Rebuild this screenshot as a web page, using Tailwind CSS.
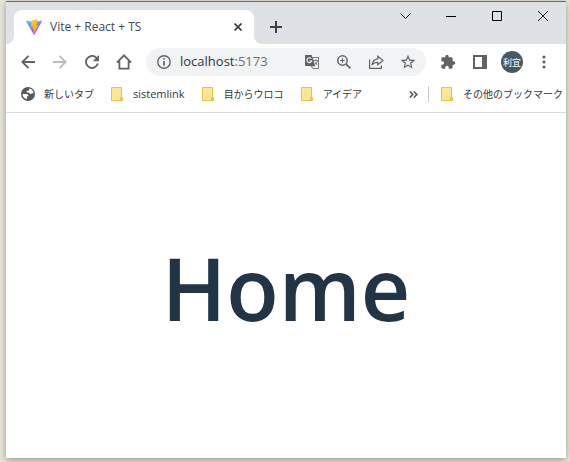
<!DOCTYPE html>
<html lang="ja">
<head>
    <meta charset="UTF-8">
    <meta name="viewport" content="width=device-width, initial-scale=1.0">
    <title>Vite + React + TS</title>
    <script src="https://cdn.jsdelivr.net/npm/@tailwindcss/browser@4"></script>
</head>
<body class="bg-[#e9e6da] font-['Open_Sans','Noto_Sans_CJK_JP',sans-serif]">
    <div class="h-screen px-1 pb-1 pl-[6px] pt-px">
        <div class="flex h-full flex-col border-t border-[#6b6b68] bg-white shadow-[0_2px_7px_rgba(80,75,55,0.5)]">
            <!-- tab strip -->
            <header class="flex h-[42px] shrink-0 bg-[#dee1e6]">
                <div class="w-2 bg-white"><div class="h-full rounded-br-lg bg-[#dee1e6]"></div></div>
                <div class="mt-2 flex w-60 items-center rounded-t-lg bg-white pl-3 pr-2">
                    <svg class="size-4" viewBox="0 0 32 32">
                        <defs>
                            <linearGradient id="shield" x1="0" y1="0" x2="0.6" y2="1"><stop stop-color="#41d1ff"/><stop offset="1" stop-color="#bd34fe"/></linearGradient>
                            <linearGradient id="bolt" x1="0.3" y1="0" x2="0.6" y2="1"><stop stop-color="#ffd83a"/><stop offset="0.2" stop-color="#ffc520"/><stop offset="1" stop-color="#ffa800"/></linearGradient>
                        </defs>
                        <path fill="url(#shield)" d="M31.8 4.8 16.9 31a.9.9 0 0 1-1.5 0L.2 4.8a.9.9 0 0 1 .9-1.3L16 6.2l14.9-2.7a.9.9 0 0 1 .9 1.3Z"/>
                        <path fill="url(#bolt)" d="m23.3.3-12.3 2.400-1 13.300 4.400-.9-1.200 5.500 3-.8-1.800 9c-.1.6.6.8.9.4L25 11.800l-4.300.8L23.300.3Z"/>
                    </svg>
                    <span class="ml-2 flex-1 whitespace-nowrap text-xs text-[#45494d]">Vite + React + TS</span>
                    <button class="flex size-4 items-center justify-center" aria-label="Close tab">
                        <svg class="size-2" viewBox="0 0 8 8" fill="none" stroke="#3c4043" stroke-width="1.7"><path d="m.5.5 7 7m0-7-7 7"/></svg>
                    </button>
                </div>
                <div class="w-2 bg-white"><div class="h-full rounded-bl-lg bg-[#dee1e6]"></div></div>
                <button class="mt-[11px] flex size-7 items-center justify-center" aria-label="New tab">
                    <svg class="size-3" viewBox="0 0 12 12" fill="none" stroke="#3c4043" stroke-width="2"><path d="M6 0v12M0 6h12"/></svg>
                </button>
                <div class="ml-auto flex h-7 text-[#111]">
                    <button class="flex w-[46px] items-center justify-center" aria-label="Search tabs">
                        <svg class="h-[6px] w-[11px]" viewBox="0 0 11 6" fill="none" stroke="currentColor"><path d="m.5.5 5 5 5-5"/></svg>
                    </button>
                    <button class="flex w-[46px] items-center justify-center" aria-label="Minimize">
                        <svg class="h-px w-[10px]" viewBox="0 0 10 1"><path fill="#000" d="M0 0h10v1H0z"/></svg>
                    </button>
                    <button class="flex w-[46px] items-center justify-center" aria-label="Maximize">
                        <svg class="size-[10px]" viewBox="0 0 10 10" fill="none" stroke="#000"><path d="M.5.5h9v9h-9z"/></svg>
                    </button>
                    <button class="flex w-[46px] items-center justify-center" aria-label="Close">
                        <svg class="size-[10px]" viewBox="0 0 10 10" fill="none" stroke="currentColor"><path d="m0 0 10 10M10 0 0 10"/></svg>
                    </button>
                </div>
            </header>

            <!-- toolbar -->
            <nav class="flex h-9 shrink-0 items-center px-[6px] text-[#5f6368]">
                <button class="flex w-8 justify-center" aria-label="Back">
                    <svg class="size-[14px]" viewBox="0 0 14 14" fill="none" stroke="currentColor" stroke-width="1.9"><path d="M14 7H1.5M7.5.8 1.3 7l6.2 6.2"/></svg>
                </button>
                <button class="flex w-8 justify-center text-[#bbbdbf]" aria-label="Forward">
                    <svg class="size-[14px]" viewBox="0 0 14 14" fill="none" stroke="currentColor" stroke-width="1.9"><path d="M0 7h12.5M6.5.8 12.7 7l-6.2 6.2"/></svg>
                </button>
                <button class="flex w-8 justify-center" aria-label="Reload">
                    <svg class="size-[14px]" viewBox="0 0 14 14" fill="none" stroke="currentColor" stroke-width="1.9"><path d="M12.8 8.6A6 6 0 1 1 11.2 2.6L12.8 4.2"/><path fill="currentColor" stroke="none" d="M14 0v6.2H7.8z"/></svg>
                </button>
                <button class="flex w-8 justify-center" aria-label="Home page">
                    <svg class="size-4" viewBox="0 0 16 16" fill="none" stroke="currentColor" stroke-width="1.8"><path d="M.9 8.6 8 1.4l7.1 7.2M3.4 7v7.6h9.2V7"/></svg>
                </button>
                <div class="ml-[6px] mr-[6px] flex h-7 min-w-0 flex-1 items-center rounded-full bg-[#f1f3f4] pl-[11px] pr-[2px]">
                    <svg class="size-[14px] shrink-0" viewBox="0 0 14 14" fill="none" stroke="currentColor" stroke-width="1.4"><circle cx="7" cy="7" r="6.2"/><path stroke-width="1.7" d="M7 3.2v1.6M7 6v4.7"/></svg>
                    <a href="#" class="ml-[9px] min-w-0 flex-1 text-[13px] text-[#33363a]">localhost<span class="text-[#6b6f74]">:5173</span></a>
                    <button class="flex w-8 shrink-0 justify-center" aria-label="Translate">
                        <svg class="size-4" viewBox="0 0 16 16" fill="none">
                            <path fill="#f1f3f4" stroke="#75797d" d="M8.5 3.500h6v11H9l-2-2.500h3.600z"/>
                            <path fill="#5f6368" d="M1 1h6.700l3 11H2a1 1 0 0 1-1-1V1Z"/>
                            <path stroke="#f1f3f4" stroke-width="1.100" d="M7.300 4.800A2.400 2.400 0 1 0 7.600 7H5.400"/>
                            <path stroke="#75797d" d="M9.700 6.500h4.300M12 5.300v1.200M13.300 6.800c-.5 2-1.300 3-2.500 3.900M11 8c.6 1.200 1.300 2 2.500 3"/>
                        </svg>
                    </button>
                    <button class="flex w-8 shrink-0 justify-center" aria-label="Zoom">
                        <svg class="size-[14px]" viewBox="0 0 14 14" fill="none" stroke="currentColor" stroke-width="1.5"><circle cx="5.500" cy="5.500" r="4.700"/><path d="m8.900 8.900 4.500 4.500"/><path stroke-width="1.100" d="M5.500 3.200v4.600M3.200 5.500h4.600"/></svg>
                    </button>
                    <button class="flex w-8 shrink-0 justify-center" aria-label="Share">
                        <svg class="size-4" viewBox="0 0 16 16" fill="none" stroke="currentColor" stroke-width="1.2"><path d="M1.600 5.500v8.900h11.800V11.500M9.800 2.200 15 6.500l-5.200 4.300V8.400C7.600 8.300 5.500 9 4 11c.5-3.500 2.500-5.700 5.800-6.200z"/></svg>
                    </button>
                    <button class="flex w-8 shrink-0 justify-center" aria-label="Bookmark this tab">
                        <svg class="size-4" viewBox="1 1 22 22" fill="currentColor"><path d="m22 9.240-7.190-.62L12 2 9.190 8.630 2 9.240l5.460 4.730L5.820 21 12 17.270 18.180 21l-1.630-7.030L22 9.240ZM12 15.400l-3.760 2.270 1-4.280-3.320-2.880 4.380-.38L12 6.100l1.710 4.040 4.380.38-3.320 2.880 1 4.280L12 15.400Z"/></svg>
                    </button>
                </div>
                <button class="flex w-8 justify-center" aria-label="Extensions">
                    <svg class="size-4" viewBox="0 0 24 24" fill="currentColor"><path d="M20.500 11H19V7a2 2 0 0 0-2-2h-4V3.500a2.500 2.500 0 0 0-5 0V5H4a2 2 0 0 0-2 2v3.800h1.500a2.700 2.700 0 0 1 0 5.400H2V20a2 2 0 0 0 2 2h3.800v-1.500a2.700 2.700 0 0 1 5.400 0V22H17a2 2 0 0 0 2-2v-4h1.500a2.500 2.500 0 0 0 0-5Z"/></svg>
                </button>
                <button class="flex w-8 justify-center" aria-label="Side panel">
                    <svg class="size-[14px]" viewBox="0 0 14 14"><path fill="currentColor" fill-rule="evenodd" d="M0 0h14v14H0zM2 2v10h7V2z"/></svg>
                </button>
                <button class="flex w-8 justify-center" aria-label="Profile">
                    <span class="flex size-[22px] items-center justify-center rounded-full bg-[#455a64] text-[9px] leading-none text-white">利宜</span>
                </button>
                <button class="flex w-8 justify-center" aria-label="Menu">
                    <svg class="h-[14px] w-1" viewBox="0 0 4 14" fill="currentColor"><circle cx="2" cy="2" r="1.6"/><circle cx="2" cy="7" r="1.6"/><circle cx="2" cy="12" r="1.6"/></svg>
                </button>
            </nav>

            <!-- bookmarks bar -->
            <nav class="flex h-[33px] shrink-0 items-center gap-[17px] whitespace-nowrap border-b border-[#dadce0] pb-1 pl-[15px] text-[10px] text-[#33363a]">
                <a href="#" class="flex items-center gap-[9px]">
                    <svg class="size-[14px]" viewBox="0 0 14 14"><circle cx="7" cy="7" r="7" fill="#55595e"/><path fill="#fff" d="M1.500 7h4c1.600 0 2 1 2 2.200H6v2.900c-2.600-.2-4.500-2.400-4.500-5.100ZM8.200 1.600v.9c0 .8-.5 1.300-1.300 1.300H5.700V5c0 .5 1 .6 1.800.6.8 0 1 .7 1.400 1.200.5.5 1.300.2 1.700-.2.500-.4 1.100-.3 1.900-.2-.2-2.500-1.900-4.400-4.300-4.800Z"/></svg>
                    新しいタブ
                </a>
                <a href="#" class="flex items-center gap-[10px]">
                    <svg class="h-[14px] w-3" viewBox="0 0 12 14" fill="#ffe694" stroke="#e8c34a"><path d="M.5.500h10v13H.5zM9.500 13.500V10.500l1-1 1 1v3z"/></svg>
                    <span class="text-[11px]">sistemlink</span>
                </a>
                <a href="#" class="flex items-center gap-[10px]">
                    <svg class="h-[14px] w-3" viewBox="0 0 12 14" fill="#ffe694" stroke="#e8c34a"><path d="M.5.500h10v13H.5zM9.500 13.500V10.500l1-1 1 1v3z"/></svg>
                    目からウロコ
                </a>
                <a href="#" class="flex items-center gap-[10px]">
                    <svg class="h-[14px] w-3" viewBox="0 0 12 14" fill="#ffe694" stroke="#e8c34a"><path d="M.5.500h10v13H.5zM9.500 13.500V10.500l1-1 1 1v3z"/></svg>
                    アイデア
                </a>
                <div class="ml-auto flex items-center pr-[3px]">
                    <button aria-label="More bookmarks">
                        <svg class="h-[7px] w-[9px]" viewBox="0 0 9 7" fill="none" stroke="#55595e" stroke-width="1.600"><path d="m.8.500 3 3-3 3m4-6 3 3-3 3"/></svg>
                    </button>
                    <div class="ml-[10px] mr-3 h-4 w-px bg-[#c8cacd]"></div>
                    <a href="#" class="flex items-center gap-[10px]">
                        <svg class="h-[14px] w-3" viewBox="0 0 12 14" fill="#ffe694" stroke="#e8c34a"><path d="M.5.500h10v13H.5zM9.500 13.500V10.500l1-1 1 1v3z"/></svg>
                        その他のブックマーク
                    </a>
                </div>
            </nav>

            <!-- page -->
            <main class="flex flex-1 items-center justify-center pt-1">
                <h1 class="text-[86px] font-semibold leading-none text-[#213547]">Home</h1>
            </main>
        </div>
    </div>
</body>
</html>
